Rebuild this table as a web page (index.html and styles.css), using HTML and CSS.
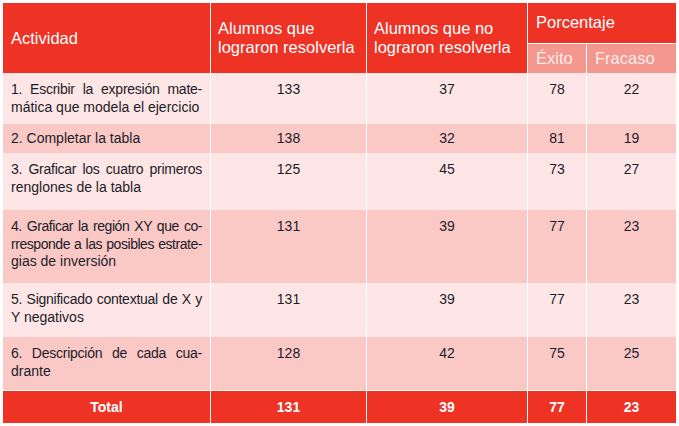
FILE: index.html
```html
<!DOCTYPE html>
<html lang="es">
<head>
<meta charset="utf-8">
<title>Actividades</title>
<link rel="stylesheet" href="styles.css">
</head>
<body>
<table class="tabla">
  <colgroup>
    <col class="c1"><col class="c2"><col class="c3"><col class="c4"><col class="c5">
  </colgroup>
  <thead>
    <tr class="h1">
      <th rowspan="2" class="hd">Actividad</th>
      <th rowspan="2" class="hd sep">Alumnos que<br>lograron resolverla</th>
      <th rowspan="2" class="hd sep">Alumnos que no<br>lograron resolverla</th>
      <th colspan="2" class="hd sep pc">Porcentaje</th>
    </tr>
    <tr class="h2">
      <th class="sub sep">Éxito</th>
      <th class="sub sep">Fracaso</th>
    </tr>
  </thead>
  <tbody>
    <tr class="lt r1">
      <td class="act"><span class="ln">1. Escribir la expresión mate-</span><span class="last">mática que modela el ejercicio</span></td>
      <td class="num sep">133</td><td class="num sep">37</td><td class="num sep">78</td><td class="num sep">22</td>
    </tr>
    <tr class="dk r2">
      <td class="act">2. Completar la tabla</td>
      <td class="num sep">138</td><td class="num sep">32</td><td class="num sep">81</td><td class="num sep">19</td>
    </tr>
    <tr class="lt r3">
      <td class="act"><span class="ln">3. Graficar los cuatro primeros</span><span class="last">renglones de la tabla</span></td>
      <td class="num sep">125</td><td class="num sep">45</td><td class="num sep">73</td><td class="num sep">27</td>
    </tr>
    <tr class="dk r4">
      <td class="act"><span class="ln tight">4. Graficar la región XY que co-</span><span class="ln tight">rresponde a las posibles estrate-</span><span class="last">gias de inversión</span></td>
      <td class="num sep">131</td><td class="num sep">39</td><td class="num sep">77</td><td class="num sep">23</td>
    </tr>
    <tr class="lt r5">
      <td class="act"><span class="ln">5. Significado contextual de X y</span><span class="last">Y negativos</span></td>
      <td class="num sep">131</td><td class="num sep">39</td><td class="num sep">77</td><td class="num sep">23</td>
    </tr>
    <tr class="dk r6">
      <td class="act"><span class="ln">6. Descripción de cada cua-</span><span class="last">drante</span></td>
      <td class="num sep">128</td><td class="num sep">42</td><td class="num sep">75</td><td class="num sep">25</td>
    </tr>
  </tbody>
  <tfoot>
    <tr class="tot">
      <td>Total</td>
      <td class="sep">131</td><td class="sep">39</td><td class="sep">77</td><td class="sep">23</td>
    </tr>
  </tfoot>
</table>
</body>
</html>
```
FILE: styles.css
```css
html, body {
  margin: 0;
  padding: 0;
  background: #ffffff;
}
body {
  padding: 3px;
  font-family: "Liberation Sans", Arial, sans-serif;
  color: #1c1c2a;
}
.tabla {
  border-collapse: separate;
  border-spacing: 0;
  table-layout: fixed;
  width: 673px;
}
.c1 { width: 207px; }
.c2 { width: 156px; }
.c3 { width: 161px; }
.c4 { width: 59px; }
.c5 { width: 90px; }

.tabla th, .tabla td {
  box-sizing: border-box;
  padding: 0 8px;
}
.tabla .sep { border-left: 1px solid #ffffff; }

.tabla .hd {
  background: #ee3325;
  color: #ffffff;
  font-weight: normal;
  font-size: 16.5px;
  line-height: 19px;
  text-align: left;
  vertical-align: middle;
}
.tabla .hd.sep { padding-left: 7px; }
.tabla .hd.pc { padding-left: 8px; padding-bottom: 2px; }
.tabla .sub {
  background: #f4978f;
  color: #fdeceb;
  font-weight: normal;
  font-size: 16.5px;
  line-height: 19px;
  text-align: left;
  vertical-align: middle;
  border-top: 1px solid #ffffff;
}
.h1 { height: 40px; }
.h2 { height: 30px; }

.lt td { background: #fde6e5; }
.dk td { background: #fac9c5; }

.tabla .act, .tabla .num {
  font-size: 14px;
  line-height: 17.5px;
  vertical-align: top;
  padding-top: 8px;
}
.tabla .act { text-align: left; }
.tabla .num { text-align: center; }
.ln {
  display: block;
  white-space: nowrap;
  letter-spacing: -0.25px;
  word-spacing: -1px;
  text-align: justify;
  text-align-last: justify;
}
.ln.tight {
  letter-spacing: -0.45px;
  word-spacing: -0.5px;
}
.last { display: block; white-space: nowrap; }

.r1 { height: 51px; }
.r2 { height: 29px; }
.tabla .r2 td { padding-top: 6px; }
.r3 { height: 57px; }
.r4 { height: 73px; }
.r5 { height: 54px; }
.r6 { height: 53px; }

.tot { height: 33px; }
.tabla .tot td {
  background: #ee3325;
  color: #ffffff;
  font-weight: bold;
  font-size: 14px;
  text-align: center;
  vertical-align: middle;
  border-top: 1px solid #ffffff;
}
```
